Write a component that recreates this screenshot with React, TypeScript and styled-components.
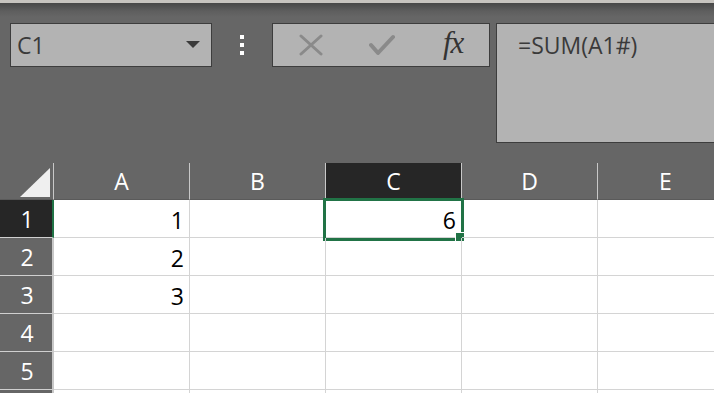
import * as React from 'react'
import styled, { createGlobalStyle } from 'styled-components'

const GlobalStyle = createGlobalStyle`
  html, body {
    margin: 0;
    padding: 0;
    background: #666;
    overflow: hidden;
  }
  * {
    box-sizing: border-box;
  }
`

const GREEN = '#217346'
const COLS = ['A', 'B', 'C', 'D', 'E']
// row 6 only peeks in at the bottom edge, its label is out of view
const ROWS = [1, 2, 3, 4, 5, 6]
const VISIBLE_LABELS = 5
const DATA: Record<string, string> = { A1: '1', A2: '2', A3: '3', C1: '6' }

const Page = styled.div`
  width: 714px;
  height: 393px;
  overflow: hidden;
  font-family: 'Open Sans', 'Noto Sans', sans-serif;
`

const TopEdge = styled.div`
  height: 3px;
  background: #c7c4bf;
`

const Toolbar = styled.div`
  display: flex;
  align-items: flex-start;
  padding: 20px 0 20px 10px;
  background: linear-gradient(to bottom, #474747 0px, #5e5e5e 8px, #666 14px);
`

const Box = styled.div`
  height: 44px;
  background: #b3b3b3;
  border: 1px solid #3d3d3d;
  color: #3a3a3a;
  font-size: 23px;
  display: flex;
  align-items: center;
`

const NameBox = styled(Box)`
  width: 202px;
  padding: 0 11px 0 6px;
  justify-content: space-between;
`

const Caret = styled.span`
  width: 0;
  height: 0;
  border-left: 7px solid transparent;
  border-right: 7px solid transparent;
  border-top: 7px solid #3a3a3a;
  margin-top: -2px;
`

const Grip = styled.div`
  width: 60px;
  height: 44px;
  display: flex;
  flex-direction: column;
  align-items: center;
  padding-top: 12px;
  gap: 4px;
`

const GripDot = styled.span`
  width: 4px;
  height: 4px;
  background: #fff;
`

const FxBox = styled(Box)`
  width: 218px;
  padding: 0 0 0 26px;
`

const IconSlot = styled.span<{ $w: number; $gap?: number }>`
  width: ${p => p.$w}px;
  margin-left: ${p => p.$gap ?? 0}px;
  display: flex;
  align-items: center;
  justify-content: center;
`

const FxText = styled.span`
  font-family: 'Liberation Serif', 'DejaVu Serif', serif;
  font-style: italic;
  font-size: 31px;
  color: #333;
  letter-spacing: -1px;
  margin-left: 25px;
  margin-top: -4px;
`

const FormulaBox = styled(Box)`
  flex: 1;
  height: 120px;
  margin-left: 6px;
  margin-right: -10px;
  align-items: flex-start;
  padding: 5px 0 0 21px;
`

const Sheet = styled.div`
  display: grid;
  grid-template-columns: 54px repeat(5, 136px);
  grid-template-rows: 37px repeat(6, 38px);
  background: #fff;
`

const Corner = styled.div`
  background: #666;
  border-right: 1px solid #c8c8c8;
  border-bottom: 1px solid #5a5a5a;
  display: flex;
`

const ColHead = styled.div<{ $active: boolean }>`
  background: ${p => (p.$active ? '#262626' : '#666')};
  color: #fff;
  font-size: 23px;
  border-right: 1px solid #c8c8c8;
  border-bottom: 1px solid ${p => (p.$active ? GREEN : '#5a5a5a')};
  display: flex;
  align-items: center;
  justify-content: center;
`

const RowHead = styled.div<{ $active: boolean }>`
  background: ${p => (p.$active ? '#262626' : '#666')};
  color: #fff;
  font-size: 23px;
  border-right: 2px solid ${p => (p.$active ? GREEN : '#c8c8c8')};
  border-bottom: 1px solid #d0d0d0;
  display: flex;
  align-items: center;
  justify-content: center;
  padding-left: 2px;
`

const Cell = styled.div`
  position: relative;
  border-right: 1px solid #d4d4d4;
  border-bottom: 1px solid #d4d4d4;
  color: #000;
  font-size: 23px;
  display: flex;
  align-items: center;
  justify-content: flex-end;
  padding: 2px 5px 0 0;
`

const Selection = styled.div`
  position: absolute;
  left: -3px;
  top: -2px;
  width: 141px;
  height: 43px;
  border: 3px solid ${GREEN};
  pointer-events: none;
`

const FillHandle = styled.span`
  position: absolute;
  right: -3px;
  bottom: -3px;
  width: 8px;
  height: 8px;
  background: ${GREEN};
  outline: 1px solid #fff;
`

const CancelIcon = () => (
  <svg width="24" height="22" viewBox="0 0 24 22">
    <path d="M2 2 L22 20 M22 2 L2 20" stroke="#8a8a8a" strokeWidth="3" strokeLinecap="round" />
  </svg>
)

const EnterIcon = () => (
  <svg width="26" height="22" viewBox="0 0 26 22">
    <path d="M2 11 L9 19 L24 3" stroke="#8a8a8a" strokeWidth="4" fill="none" strokeLinejoin="round" strokeLinecap="round" />
  </svg>
)

const SelectAll = () => (
  <svg width="53" height="36" viewBox="0 0 53 36">
    <polygon points="50,5 50,34 20,34" fill="#efefef" />
  </svg>
)

const App = () => {
  const activeCol = 'C'
  const activeRow = 1
  return (
    <Page>
      <GlobalStyle />
      <TopEdge />
      <Toolbar>
        <NameBox>
          <span>C1</span>
          <Caret />
        </NameBox>
        <Grip>
          <GripDot />
          <GripDot />
          <GripDot />
        </Grip>
        <FxBox>
          <IconSlot $w={24}><CancelIcon /></IconSlot>
          <IconSlot $w={72} $gap={23}><EnterIcon /></IconSlot>
          <FxText>fx</FxText>
        </FxBox>
        <FormulaBox>=SUM(A1#)</FormulaBox>
      </Toolbar>
      <Sheet>
        <Corner><SelectAll /></Corner>
        {COLS.map(c => (
          <ColHead key={c} $active={c === activeCol}>{c}</ColHead>
        ))}
        {ROWS.map(r => (
          <React.Fragment key={r}>
            <RowHead $active={r === activeRow}>{r <= VISIBLE_LABELS ? r : ''}</RowHead>
            {COLS.map(c => {
              const id = `${c}${r}`
              const selected = c === activeCol && r === activeRow
              return (
                <Cell key={id}>
                  {DATA[id] ?? ''}
                  {selected && (
                    <Selection>
                      <FillHandle />
                    </Selection>
                  )}
                </Cell>
              )
            })}
          </React.Fragment>
        ))}
      </Sheet>
    </Page>
  )
}

export default App
